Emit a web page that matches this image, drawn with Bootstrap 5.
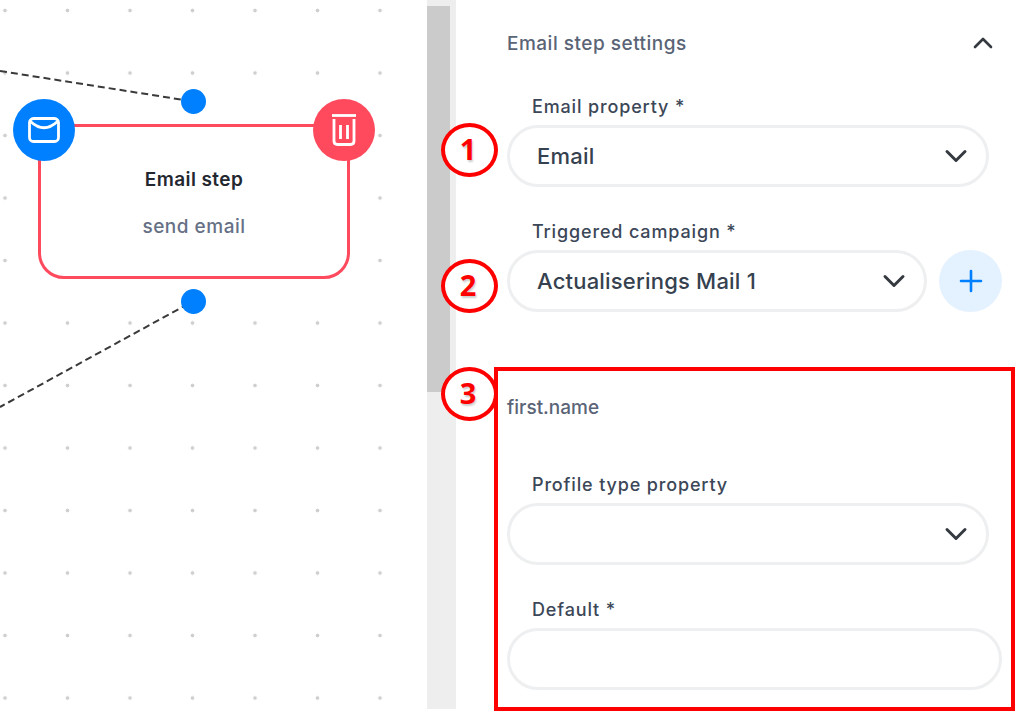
<!DOCTYPE html>
<html lang="en">
<head>
  <meta charset="UTF-8" />
  <title>Email step settings</title>
  <link href="https://cdn.jsdelivr.net/npm/bootstrap@5.3.0/dist/css/bootstrap.min.css" rel="stylesheet" />
  <style>
    html, body { height: 712px; overflow: hidden; background: #fff; }
    body { font-family: Inter, "Noto Sans", sans-serif; color: #3c4758; }

    .canvas-area {
      position: relative;
      width: 427px;
      height: 712px;
      overflow: hidden;
      background-image: radial-gradient(circle at center, #cfcfcf 0, #cfcfcf 1.6px, transparent 2.2px);
      background-size: 62.5px 62.5px;
      background-position: -26.25px -20.75px;
    }
    .links { position: absolute; left: 0; top: 0; }
    .step-box {
      position: absolute;
      left: 38px; top: 124px;
      width: 312px; height: 155px;
      border: 3px solid #ff4a5e;
      border-radius: 4px 4px 26px 26px;
      background: #fff;
      padding-top: 41px;
    }
    .step-title { font-size: 19px; font-weight: 600; line-height: 24px; letter-spacing: .4px; color: #23272f; }
    .step-sub { font-size: 19px; font-weight: 500; line-height: 24px; letter-spacing: .5px; color: #667085; margin-top: 23px; }
    .round-btn {
      position: absolute;
      top: 99px;
      width: 62px; height: 62px;
      border-radius: 50%;
    }
    .round-mail { left: 13px; background: #0080ff; }
    .round-trash { left: 313px; background: #ff4a5e; }
    .port {
      position: absolute;
      left: 181px;
      width: 25px; height: 25px;
      border-radius: 50%;
      background: #0080ff;
    }
    .port-top { top: 88.5px; }
    .port-bottom { top: 288.5px; }

    .scroll-track { width: 29px; height: 709px; background: #eeeeee; padding-top: 6px; flex: none; }
    .scroll-thumb { width: 23px; height: 386px; background: #cbcbcb; }

    .side-panel { width: 569px; padding: 29px 0 0 51px; flex: none; }
    .panel-head { width: 494px; height: 30px; }
    .panel-title { font-size: 19px; font-weight: 500; line-height: 30px; letter-spacing: .5px; color: #5a6476; }
    .panel-caret { margin-right: 7px; margin-top: -2px; }
    .first-field { margin-top: 38px; }
    .field-label { font-size: 18px; font-weight: 500; line-height: 20px; letter-spacing: .85px; margin: 0 0 8px 25px; color: #3c4758; display: block; }
    .form-select.pill-input, .form-control.pill-input {
      height: 62px;
      border: 3px solid #eeeff1;
      border-radius: 31px;
      padding: 0 60px 0 27px;
      font-size: 22px;
      font-weight: 500;
      letter-spacing: .2px;
      color: #36414f;
      box-shadow: none;
    }
    .form-select.pill-input { background-size: 24px 24px; background-position: right 18px center; }
    .form-control.pill-input { padding-right: 27px; }
    .w-short { width: 482px; }
    .w-shorter { width: 420px; }
    .w-full { width: 495px; }
    .field-gap { margin-top: 35px; }
    .add-btn {
      width: 63px; height: 62px;
      border-radius: 50%;
      background: #e4f1fe;
      border: 0;
      padding: 0;
      margin-left: 12px;
    }
    .sub-title { font-size: 19px; font-weight: 500; line-height: 24px; color: #5a6476; margin-top: 84px; }
    .sub-gap { margin-top: 55px; }

    /* annotations drawn over the screenshot */
    .mark-ring {
      position: absolute;
      left: 441px;
      width: 57px; height: 54px;
      border: 4px solid #f00;
      border-radius: 50%;
      background: #fff;
      color: #f00;
      font-family: "Open Sans", sans-serif;
      font-weight: 700;
      font-size: 29px;
      line-height: 44px;
      text-align: center;
      padding-right: 3px;
      text-shadow: 1px 2px 2px rgba(0,0,0,.2);
    }
    .ring-one { top: 123px; }
    .ring-two { top: 259px; }
    .ring-three { top: 367px; }
    .mark-box {
      position: absolute;
      left: 494px; top: 367px;
      width: 521px; height: 344px;
      border: 4px solid #f00;
      pointer-events: none;
    }
  </style>
</head>
<body>
  <div class="d-flex position-relative">
    <div class="canvas-area flex-shrink-0">
      <svg class="links" width="427" height="712" fill="none" stroke="#3a3a3a" stroke-width="2" stroke-dasharray="7 4">
        <path d="M0 71 L184 100" />
        <path d="M188 304 L0 407" />
      </svg>
      <div class="step-box text-center">
        <div class="step-title">Email step</div>
        <div class="step-sub">send email</div>
      </div>
      <div class="port port-top"></div>
      <div class="port port-bottom"></div>
      <div class="round-btn round-mail d-flex align-items-center justify-content-center">
        <svg width="32" height="26" viewBox="0 0 32 26" fill="none" stroke="#fff" stroke-width="2.8" stroke-linecap="round" stroke-linejoin="round">
          <rect x="1.5" y="1.5" width="29" height="23" rx="4" />
          <path d="M2.5 4.5 Q16 17 29.5 4.5" />
        </svg>
      </div>
      <div class="round-btn round-trash d-flex align-items-center justify-content-center">
        <svg width="26" height="32" viewBox="0 0 26 32" fill="none" stroke="#fff" stroke-width="2.8">
          <path d="M1 1.5 H25" />
          <path d="M3 5 V27 Q3 30.5 6.5 30.5 H19.5 Q23 30.5 23 27 V5" />
          <path d="M9.5 11 V25 M16.5 11 V25" />
        </svg>
      </div>
    </div>

    <div class="scroll-track"><div class="scroll-thumb"></div></div>

    <div class="side-panel">
      <div class="panel-head d-flex justify-content-between align-items-center">
        <span class="panel-title">Email step settings</span>
        <svg class="panel-caret" width="22" height="14" viewBox="0 0 22 14" fill="none" stroke="#343a40" stroke-width="2.6" stroke-linecap="round" stroke-linejoin="round">
          <path d="M3 11 L11 3 L19 11" />
        </svg>
      </div>

      <div class="first-field">
        <label class="field-label">Email property *</label>
        <select class="form-select pill-input w-short"><option>Email</option></select>
      </div>

      <div class="field-gap">
        <label class="field-label">Triggered campaign *</label>
        <div class="d-flex">
          <select class="form-select pill-input w-shorter"><option>Actualiserings Mail 1</option></select>
          <button class="add-btn d-flex align-items-center justify-content-center" type="button">
            <svg width="24" height="24" viewBox="0 0 24 24" fill="none" stroke="#0080ff" stroke-width="2.6" stroke-linecap="round">
              <path d="M12 2 V22 M2 12 H22" />
            </svg>
          </button>
        </div>
      </div>

      <div class="sub-title">first.name</div>

      <div class="sub-gap">
        <label class="field-label">Profile type property</label>
        <select class="form-select pill-input w-short"><option></option></select>
      </div>

      <div class="field-gap">
        <label class="field-label">Default *</label>
        <input class="form-control pill-input w-full" type="text" />
      </div>
    </div>

    <div class="mark-ring ring-one">1</div>
    <div class="mark-ring ring-two">2</div>
    <div class="mark-ring ring-three">3</div>
    <div class="mark-box"></div>
  </div>
  <script src="https://cdn.jsdelivr.net/npm/bootstrap@5.3.0/dist/js/bootstrap.bundle.min.js"></script>
</body>
</html>
